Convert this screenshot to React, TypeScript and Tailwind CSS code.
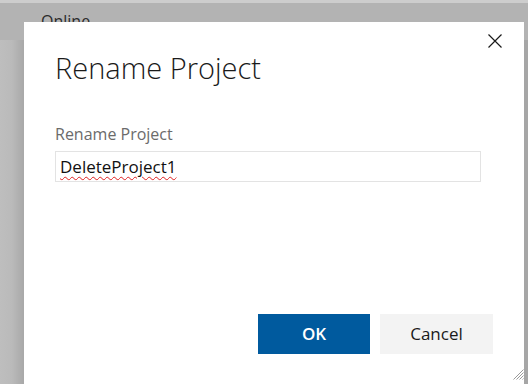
import React from "react";

const font = { fontFamily: '"Open Sans", "Noto Sans", sans-serif' };

export default function App() {
  return (
    <div className="relative w-[528px] h-[384px] overflow-hidden bg-[#bdbdbd]" style={font}>
      {/* Page behind the overlay */}
      <div className="h-[3px] bg-[#cdcdcd]" />
      <div className="h-[37px] bg-[#b3b3b3] pl-[41px] pt-[8px] text-[16px] leading-[20px] text-[#2b2b2b]">
        Online
      </div>
      <div className="flex h-[344px]">
        <div className="w-[24px] bg-gradient-to-r from-[#bebebe] via-[#bababa] to-[#a8a8a8]" />
        <div className="flex-1" />
        <div className="w-[4px] bg-[#a6a6a6]" />
      </div>

      {/* Dialog */}
      <div className="absolute left-[24px] top-[22px] w-[500px] h-[380px] bg-white">
        <button className="absolute right-[22px] top-[12px] w-[14px] h-[14px] text-[#1a1a1a]">
          <svg width="14" height="14" viewBox="0 0 14 14" fill="none" stroke="currentColor" strokeWidth="1.2">
            <path d="M0.5 0.5 L13.5 13.5 M13.5 0.5 L0.5 13.5" />
          </svg>
        </button>
        <div className="pl-[31px] pr-[43px]">
          <h1 className="pt-[26px] text-[29px] leading-[40px] font-light text-[#1a1a1a]">Rename Project</h1>
          <label className="block mt-[35px] text-[16px] leading-[22px] text-[#6b6b6b]">Rename Project</label>
          <div className="mt-[6px] h-[31px] border border-[#e3e3e3] flex items-center pl-[4px]">
            <span className="text-[17px] leading-[22px] text-[#111] underline decoration-wavy decoration-[#e02020] decoration-1 underline-offset-[3px]">
              DeleteProject1
            </span>
          </div>
        </div>
        <div className="flex justify-end gap-[10px] mt-[132px] pr-[31px]">
          <button className="w-[112px] h-[40px] bg-[#005a9e] text-white text-[17px] font-semibold">OK</button>
          <button className="w-[113px] h-[40px] bg-[#f3f3f3] text-[#1a1a1a] text-[17px]">Cancel</button>
        </div>
        <svg className="absolute left-[488px] top-[346px]" width="12" height="12" viewBox="0 0 12 12" stroke="#9a9a9a" strokeWidth="1">
          <path d="M11.5 1.5 L1.5 11.5 M11.5 4.5 L4.5 11.5 M11.5 7.5 L7.5 11.5 M11.5 10.5 L10.5 11.5" />
        </svg>
      </div>
    </div>
  );
}
